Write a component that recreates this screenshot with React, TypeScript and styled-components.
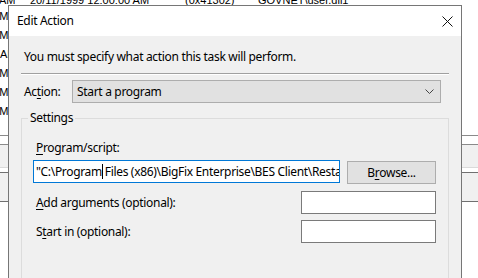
import React from 'react'
import styled, { createGlobalStyle } from 'styled-components'

const GlobalStyle = createGlobalStyle`
  html, body {
    margin: 0;
    padding: 0;
    background: #ffffff;
    overflow: hidden;
  }
`

const Screen = styled.div`
  position: relative;
  width: 478px;
  height: 278px;
  overflow: hidden;
  background: #ffffff;
  font-family: 'Noto Sans', 'Segoe UI', sans-serif;
  font-size: 12px;
  letter-spacing: -0.32px;
  color: #000;
`

/* ---------- background log list ---------- */
const LogList = styled.div`
  display: flex;
  flex-direction: column;
  margin-top: -7px;
  font-family: 'Liberation Sans', Arial, sans-serif;
  font-size: 11px;
  letter-spacing: 0;
  color: #000;
`
const HeaderRow = styled.div`
  display: grid;
  grid-template-columns: 31px 155px 73px auto;
  height: 14px;
  line-height: 14px;
  margin-left: -1px;
  white-space: nowrap;
`
const LogRow = styled.div<{ $shift: number }>`
  height: 19px;
  line-height: 19px;
  margin-left: ${p => p.$shift}px;
  white-space: nowrap;
`
const Band = styled.div`
  margin-top: 14px;
  height: 8px;
  border-top: 1px solid #8a8a8a;
  border-bottom: 1px solid #8a8a8a;
  background: #ffffff;
`
const ScrollTrack = styled.div`
  height: 22px;
  background: #f0f0f0;
  border-bottom: 1px solid #dadada;
`
const TabStrip = styled.div`
  height: 4px;
  background: #ffffff;
  border-bottom: 1px solid #707070;
`
const Pane = styled.div`
  height: 28px;
  background: #f0f0f0;
  border-bottom: 1px solid #707070;
`

/* ---------- dialog ---------- */
const Dialog = styled.div`
  position: absolute;
  left: 8px;
  top: 5px;
  width: 452px;
  height: 300px;
  border: 1px solid #767676;
  background: #f0f0f0;
  display: flex;
  flex-direction: column;
`
const TitleBar = styled.div`
  height: 30px;
  flex: none;
  background: #ffffff;
  display: flex;
  align-items: center;
  justify-content: space-between;
  padding: 0 8px 0 8px;
`
const Title = styled.span`
  line-height: 16px;
`
const Body = styled.div`
  display: flex;
  flex-direction: column;
  padding: 0 12px;
`
const Intro = styled.div`
  margin-top: 13px;
  padding-left: 3px;
  line-height: 16px;
`
const Separator = styled.div`
  margin-top: 8px;
  border-top: 1px solid #a0a0a0;
  border-bottom: 1px solid #ffffff;
`
const ActionRow = styled.div`
  margin-top: 5px;
  display: flex;
  align-items: center;
`
const Label = styled.span<{ $width?: number; $tall?: boolean }>`
  padding-left: 3px;
  line-height: ${p => (p.$tall ? '23px' : '16px')};
  width: ${p => (p.$width ? `${p.$width}px` : 'auto')};
  box-sizing: border-box;
  white-space: nowrap;
`
const Key = styled.u`
  text-decoration: underline;
  text-underline-offset: 2px;
`
const Combo = styled.div`
  box-sizing: border-box;
  width: 369px;
  height: 23px;
  border: 1px solid #adadad;
  background: #e1e1e1;
  display: flex;
  align-items: center;
  justify-content: space-between;
  padding: 0 6px 0 4px;
`
const Group = styled.fieldset`
  margin: 7px 0 0 0;
  border: 1px solid #dcdcdc;
  padding: 14px 12px 60px 11px;
  display: flex;
  flex-direction: column;
`
const Legend = styled.legend`
  margin-left: -5px;
  padding: 0 2px;
  line-height: 16px;
`
const FieldRow = styled.div<{ $gap: number }>`
  display: flex;
  align-items: flex-start;
  justify-content: space-between;
  margin-top: ${p => p.$gap}px;
`
const TextBox = styled.div<{ $width: number; $focused?: boolean }>`
  box-sizing: border-box;
  width: ${p => p.$width}px;
  height: 23px;
  border: 1px solid ${p => (p.$focused ? '#0078d7' : '#7a7a7a')};
  background: #ffffff;
  padding: 0 2px;
  line-height: 21px;
  white-space: nowrap;
  overflow: hidden;
`
const Caret = styled.span`
  display: inline-block;
  width: 1px;
  height: 15px;
  background: #000;
  vertical-align: -3px;
  margin-right: -1px;
`
const Button = styled.div`
  box-sizing: border-box;
  width: 89px;
  height: 23px;
  margin-top: 1px;
  border: 1px solid #adadad;
  background: #e1e1e1;
  display: flex;
  align-items: center;
  justify-content: center;
  white-space: nowrap;
`

const CloseIcon = () => (
  <svg width="11" height="11" viewBox="0 0 11 11">
    <path d="M0.5 0.5 L10.5 10.5 M10.5 0.5 L0.5 10.5" stroke="#111" strokeWidth="1" fill="none" />
  </svg>
)

const Chevron = () => (
  <svg width="9" height="5" viewBox="0 0 9 5">
    <path d="M0.5 0.5 L4.5 4.5 L8.5 0.5" stroke="#444" strokeWidth="1" fill="none" />
  </svg>
)

const rowShifts = [-8, -8, 0, -8, -8, -8]

export default function App() {
  return (
    <Screen>
      <GlobalStyle />
      <LogList>
        <HeaderRow>
          <span>AM</span>
          <span>20/11/1999 12:00:00 AM</span>
          <span>(0x41302)</span>
          <span>GOVNET\user.dll1</span>
        </HeaderRow>
        {rowShifts.map((s, i) => (
          <LogRow key={i} $shift={s}>
            AM
          </LogRow>
        ))}
        <Band />
        <ScrollTrack />
        <TabStrip />
        <Pane />
      </LogList>

      <Dialog>
        <TitleBar>
          <Title>Edit Action</Title>
          <CloseIcon />
        </TitleBar>
        <Body>
          <Intro>You must specify what action this task will perform.</Intro>
          <Separator />
          <ActionRow>
            <Label $width={51}>
              Ac<Key>t</Key>ion:
            </Label>
            <Combo>
              <span>Start a program</span>
              <Chevron />
            </Combo>
          </ActionRow>
          <Group>
            <Legend>Settings</Legend>
            <Label>
              <Key>P</Key>rogram/script:
            </Label>
            <FieldRow $gap={4}>
              <TextBox $width={307} $focused>
                "C:\Program<Caret /> Files (x86)\BigFix Enterprise\BES Client\RestartTask.exe"
              </TextBox>
              <Button>
                B<Key>r</Key>owse...
              </Button>
            </FieldRow>
            <FieldRow $gap={7}>
              <Label $tall>
                <Key>A</Key>dd arguments (optional):
              </Label>
              <TextBox $width={135} />
            </FieldRow>
            <FieldRow $gap={6}>
              <Label $tall>
                S<Key>t</Key>art in (optional):
              </Label>
              <TextBox $width={135} />
            </FieldRow>
          </Group>
        </Body>
      </Dialog>
    </Screen>
  )
}
